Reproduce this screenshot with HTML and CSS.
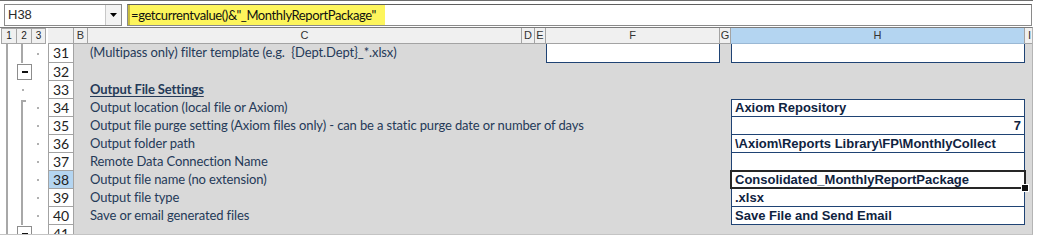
FILE: index.html
```html
<!DOCTYPE html>
<html>
<head>
<meta charset="utf-8">
<link rel="stylesheet" href="styles.css">
</head>
<body>
<div class="app">
  <div class="fbar">
    <div class="namebox">
      <span class="nb-text">H38</span>
      <span class="nb-dd"><svg width="7" height="4" viewBox="0 0 7 4"><path d="M0 0h7L3.5 4z" fill="#000"/></svg></span>
    </div>
    <div class="formula"><span class="hl">=getcurrentvalue()&amp;"_MonthlyReportPackage"</span></div>
  </div>
  <div class="sheet">
    <div class="row hdr">
      <div class="lvls"><span class="lvl">1</span><span class="lvl">2</span><span class="lvl">3</span></div>
      <div class="ch"></div>
      <div class="ch">B</div>
      <div class="ch">C</div>
      <div class="ch">D</div>
      <div class="ch">E</div>
      <div class="ch">F</div>
      <div class="ch">G</div>
      <div class="ch sel">H</div>
      <div class="ch ci">I</div>
    </div>

    <div class="row r31">
      <div class="ol"><span class="l1"></span><span class="l2 vline"></span><span class="l3 dot"></span></div>
      <div class="rh">31</div>
      <div class="c"></div>
      <div class="c txt">(Multipass only) filter template (e.g.  {Dept.Dept}_*.xlsx)</div>
      <div class="c"></div><div class="c"></div>
      <div class="c box open"></div>
      <div class="c"></div>
      <div class="c box open"></div>
      <div class="c"></div>
    </div>

    <div class="row">
      <div class="ol"><span class="l1"></span><span class="l2"><span class="mbtn"><i></i></span></span><span class="l3"></span></div>
      <div class="rh">32</div>
      <div class="c"></div><div class="c txt"></div>
      <div class="c"></div><div class="c"></div><div class="c"></div><div class="c"></div><div class="c"></div><div class="c"></div>
    </div>

    <div class="row">
      <div class="ol"><span class="l1"></span><span class="l2 dot2"></span><span class="l3"></span></div>
      <div class="rh">33</div>
      <div class="c"></div><div class="c txt head">Output File Settings</div>
      <div class="c"></div><div class="c"></div><div class="c"></div><div class="c"></div><div class="c"></div><div class="c"></div>
    </div>

    <div class="row">
      <div class="ol"><span class="l1"></span><span class="l2 vline start"></span><span class="l3 dot"></span></div>
      <div class="rh">34</div>
      <div class="c"></div><div class="c txt">Output location (local file or Axiom)</div>
      <div class="c"></div><div class="c"></div><div class="c"></div><div class="c"></div>
      <div class="c box val">Axiom Repository</div>
      <div class="c"></div>
    </div>

    <div class="row">
      <div class="ol"><span class="l1"></span><span class="l2 vline"></span><span class="l3 dot"></span></div>
      <div class="rh">35</div>
      <div class="c"></div><div class="c txt">Output file purge setting (Axiom files only) - can be a static purge date or number of days</div>
      <div class="c"></div><div class="c"></div><div class="c"></div><div class="c"></div>
      <div class="c box cont val num">7</div>
      <div class="c"></div>
    </div>

    <div class="row">
      <div class="ol"><span class="l1"></span><span class="l2 vline"></span><span class="l3 dot"></span></div>
      <div class="rh">36</div>
      <div class="c"></div><div class="c txt">Output folder path</div>
      <div class="c"></div><div class="c"></div><div class="c"></div><div class="c"></div>
      <div class="c box cont val">\Axiom\Reports Library\FP\MonthlyCollect</div>
      <div class="c"></div>
    </div>

    <div class="row">
      <div class="ol"><span class="l1"></span><span class="l2 vline"></span><span class="l3 dot"></span></div>
      <div class="rh">37</div>
      <div class="c"></div><div class="c txt">Remote Data Connection Name</div>
      <div class="c"></div><div class="c"></div><div class="c"></div><div class="c"></div>
      <div class="c box cont val"></div>
      <div class="c"></div>
    </div>

    <div class="row">
      <div class="ol"><span class="l1"></span><span class="l2 vline"></span><span class="l3 dot"></span></div>
      <div class="rh active">38</div>
      <div class="c"></div><div class="c txt">Output file name (no extension)</div>
      <div class="c"></div><div class="c"></div><div class="c"></div><div class="c"></div>
      <div class="c box cont val selected">Consolidated_MonthlyReportPackage</div>
      <div class="c"></div>
    </div>

    <div class="row">
      <div class="ol"><span class="l1"></span><span class="l2 vline"></span><span class="l3 dot"></span></div>
      <div class="rh">39</div>
      <div class="c"></div><div class="c txt">Output file type</div>
      <div class="c"></div><div class="c"></div><div class="c"></div><div class="c"></div>
      <div class="c box cont val">.xlsx</div>
      <div class="c"></div>
    </div>

    <div class="row">
      <div class="ol"><span class="l1"></span><span class="l2 vline"></span><span class="l3 dot"></span></div>
      <div class="rh">40</div>
      <div class="c"></div><div class="c txt">Save or email generated files</div>
      <div class="c"></div><div class="c"></div><div class="c"></div><div class="c"></div>
      <div class="c box cont val">Save File and Send Email</div>
      <div class="c"></div>
    </div>

    <div class="row">
      <div class="ol"><span class="l1"></span><span class="l2"><span class="mbtn"><i></i></span></span><span class="l3"></span></div>
      <div class="rh">41</div>
      <div class="c"></div><div class="c txt"></div>
      <div class="c"></div><div class="c"></div><div class="c"></div><div class="c"></div><div class="c"></div><div class="c"></div>
    </div>
  </div>
</div>
</body>
</html>
```

FILE: styles.css
```css
* { box-sizing: border-box; }
html, body { margin: 0; padding: 0; background: #fff; }
body { width: 1039px; height: 243px; overflow: hidden; font-family: "Lato", "Liberation Sans", sans-serif; }

.app { width: 1033px; }

/* formula bar */
.fbar {
  height: 27px;
  border-top: 1px solid #6e6e6e;
  padding: 3px 0 0 4px;
  display: flex;
  gap: 5px;
}
.namebox {
  width: 118px;
  height: 22px;
  border: 1px solid #8a8a8a;
  display: flex;
  align-items: stretch;
  background: #fff;
}
.nb-text {
  flex: 1;
  padding-left: 3px;
  font-family: "Liberation Sans", sans-serif;
  font-size: 13px;
  line-height: 20px;
  color: #2a2a2a;
}
.nb-dd {
  width: 16px;
  background: #f3f3f3;
  border-left: 1px solid #c8c8c8;
  display: flex;
  align-items: center;
  justify-content: center;
}
.formula {
  width: 905px;
  height: 22px;
  border: 1px solid #8a8a8a;
  border-top-color: #5f5f5f;
  background: #fff;
  display: flex;
}
.hl {
  background: #fdf55c;
  border-left: 2px solid #c9bd3c;
  padding: 0 9px 0 1px;
  font-size: 13px;
  letter-spacing: -0.4px;
  line-height: 20px;
  color: #111;
  white-space: pre;
}

/* sheet */
.sheet {
  width: 1033px;
  height: 208px;
  overflow: hidden;
  border-top: 1px solid #7c7c7c;
  border-right: 1px solid #b4b4b4;
  border-bottom: 1px solid #c4c4c4;
  background: #d9d9d9;
}
.row {
  display: grid;
  grid-template-columns: 48px 26px 14px 434px 13px 11px 174px 11px 294px 7px;
  grid-template-rows: 18px;
  height: 18px;
}
.row.hdr { height: 16px; grid-template-rows: 16px; background: #f0f0f0; }
.row.r31 { height: 19px; grid-template-rows: 19px; }

.lvls { display: flex; padding-left: 1px; background: #fff; }
.lvl {
  width: 15px;
  height: 16px;
  border: 1px solid #a6a6a6;
  border-right: none;
  background: #f0f0f0;
  font-family: "Liberation Sans", sans-serif;
  font-size: 10px;
  line-height: 14px;
  text-align: center;
  color: #222;
}
.lvl:last-child { border-right: 1px solid #a6a6a6; }

.ch {
  border-right: 1px solid #a3a3a3;
  border-bottom: 1px solid #a3a3a3;
  font-family: "Liberation Sans", sans-serif;
  font-size: 11px;
  line-height: 15px;
  text-align: center;
  color: #333;
  background: #f0f0f0;
}
.ch.sel { background: #b4d5f1; border-bottom-color: #9ab8d4; }
.ch.ci { text-align: left; padding-left: 3px; border-right: none; overflow: hidden; }

/* outline gutter */
.ol { display: flex; background: #fff; }
.ol > span { display: block; height: 100%; }
.l1 { width: 16px; background: linear-gradient(#a8a8a8, #a8a8a8) 6px 0 / 2px 100% no-repeat; }
.l2 { width: 15px; }
.l3 { width: 17px; }
.l2.vline { background: linear-gradient(#a8a8a8, #a8a8a8) 5px 0 / 2px 100% no-repeat; }
.l2.vline.start {
  background:
    linear-gradient(#a8a8a8, #a8a8a8) 5px 1px / 2px 100% no-repeat,
    linear-gradient(#a8a8a8, #a8a8a8) 5px 1px / 5px 2px no-repeat;
}
.l2.dot2 { background: linear-gradient(#b0b0b0, #b0b0b0) 6px 50% / 2px 2px no-repeat; }
.l3.dot { background: linear-gradient(#b0b0b0, #b0b0b0) 6px 50% / 2px 2px no-repeat; }
.mbtn {
  display: flex;
  align-items: center;
  justify-content: center;
  width: 15px;
  height: 16px;
  margin: 1px 0 0 1px;
  border: 1px solid #8d8d8d;
  background: #fff;
}
.mbtn i { display: block; width: 6px; height: 2px; background: #111; }

/* row headers */
.rh {
  background: #fff;
  border-left: 1px solid #a3a3a3;
  border-right: 1px solid #a3a3a3;
  border-bottom: 1px solid #a3a3a3;
  font-size: 14px;
  line-height: 18px;
  text-align: center;
  color: #222;
}
.rh.active { background: #b4d5f1; }

/* cells */
.c { min-width: 0; }
.txt {
  padding-left: 2px;
  font-size: 13px;
  letter-spacing: -0.12px;
  line-height: 17px;
  color: #253a58;
  white-space: pre;
}
.txt.head { font-weight: 700; text-decoration: underline; text-underline-offset: 2px; }

.box {
  background: #fff;
  border: 1px solid #1f4374;
}
.box.open { border-top: none; }
.box.cont { margin-top: -1px; }
.val {
  font-family: "Liberation Sans", Arial, sans-serif;
  font-weight: 700;
  font-size: 13px;
  line-height: 16px;
  color: #0f233f;
  padding-left: 3px;
  white-space: pre;
}
.box.cont.val { line-height: 17px; }
.val.num { text-align: right; padding-right: 3px; }
.selected { position: relative; }
.selected::after {
  content: "";
  position: absolute;
  left: -2px; right: -2px; top: -1px; bottom: -1px;
  border: 2px solid #262626;
}
.selected::before {
  content: "";
  position: absolute;
  right: -5px; bottom: -4px;
  width: 6px; height: 6px;
  background: #111;
  border: 1px solid #fff;
  z-index: 2;
}
```
